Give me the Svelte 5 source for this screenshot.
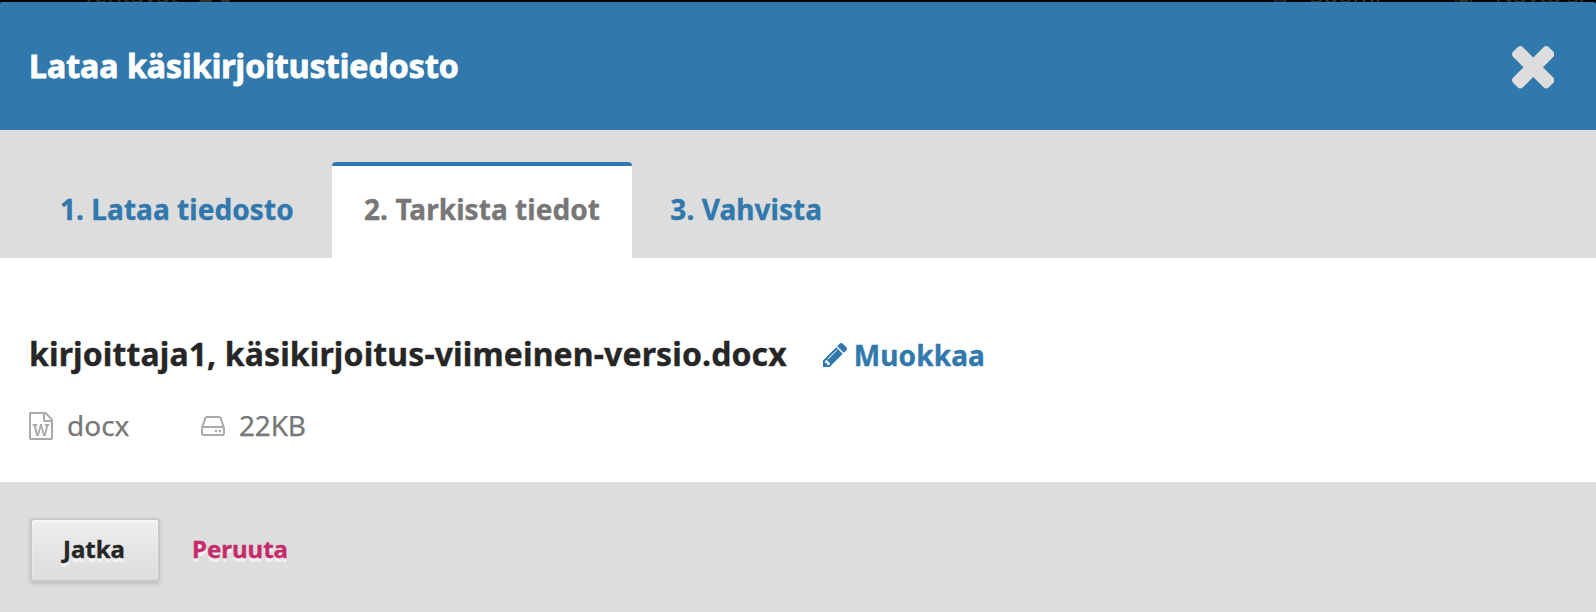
<script>
  let active = $state(1);
  const steps = ['1. Lataa tiedosto', '2. Tarkista tiedot', '3. Vahvista'];
</script>

<div class="page">
  <div class="backdrop" aria-hidden="true">
    <span class="tasks">Tehtävät <b>20</b></span>
    <span class="lang"><i>⊕</i>Suomi</span>
    <span class="site"><i>◉</i>Näytä si</span>
  </div>

  <header>
    <h1>Lataa käsikirjoitustiedosto</h1>
    <button class="close" aria-label="Sulje">
      <svg viewBox="302 366 1188 1188"><path d="M1490 1322q0 40-28 68l-136 136q-28 28-68 28t-68-28l-294-294-294 294q-28 28-68 28t-68-28l-136-136q-28-28-28-68t28-68l294-294-294-294q-28-28-28-68t28-68l136-136q28-28 68-28t68 28l294 294 294-294q28-28 68-28t68 28l136 136q28 28 28 68t-28 68l-294 294 294 294q28 28 28 68z" /></svg>
    </button>
  </header>

  <nav>
    {#each steps as step, i}
      <button class="tab" class:active={active === i} onclick={() => (active = i)}>{step}</button>
    {/each}
  </nav>

  <main>
    <div class="file">
      <span class="name">kirjoittaja1, käsikirjoitus-viimeinen-versio.docx</span>
      <button class="edit">
        <svg viewBox="128 149 1515 1515"><path d="M491 1536l91-91-235-235-91 91v107h128v128h107zm523-928q0-22-22-22-10 0-17 7l-542 542q-7 7-7 17 0 22 22 22 10 0 17-7l542-542q7-7 7-17zm-54-192l416 416-832 832h-416v-416zm683 96q0 53-37 90l-166 166-416-416 166-165q36-38 90-38 53 0 91 38l235 234q37 39 37 91z" /></svg>
        <span>Muokkaa</span>
      </button>
    </div>
    <div class="meta">
      <span class="type">
        <svg class="word" viewBox="128 0 1536 1792"><path d="M1596 380q28 28 48 76t20 88v1152q0 40-28 68t-68 28h-1344q-40 0-68-28t-28-68v-1600q0-40 28-68t68-28h896q40 0 88 20t76 48zm-444-244v376h376q-10-29-22-41l-313-313q-12-12-41-22zm384 1528v-1024h-416q-40 0-68-28t-28-68v-416h-768v1536h1280zm-1175-896v107h70l164 661h159l128-485q7-20 10-46 2-16 2-24h4l3 24q1 3 3.500 20t5.500 26l128 485h159l164-661h70v-107h-300v107h90l-99 438q-5 20-7 46l-2 21h-4l-3-21q-1-5-4-21t-5-25l-144-545h-114l-144 545q-2 9-4.500 24.500t-3.500 21.500l-4 21h-4l-2-21q-2-26-7-46l-99-438h90v-107h-300z" /></svg>
        <span>docx</span>
      </span>
      <span class="size">
        <svg class="disk" viewBox="128 256 1536 1280"><path d="M1168 1216q0 33-23.500 56.500t-56.500 23.500-56.500-23.500-23.500-56.500 23.500-56.500 56.500-23.500 56.500 23.500 23.500 56.500zm256 0q0 33-23.500 56.500t-56.500 23.500-56.500-23.500-23.500-56.500 23.500-56.500 56.500-23.500 56.500 23.500 23.500 56.500zm112 160v-320q0-13-9.500-22.500t-22.500-9.500h-1216q-13 0-22.500 9.500t-9.500 22.500v320q0 13 9.500 22.500t22.500 9.500h1216q13 0 22.500-9.500t9.500-22.500zm-1230-480h1180l-157-482q-4-13-16-21.500t-26-8.500h-782q-14 0-26 8.500t-16 21.500zm1358 160v320q0 66-47 113t-113 47h-1216q-66 0-113-47t-47-113v-320q0-25 16-75l197-606q17-53 63-86t101-33h782q55 0 101 33t63 86l197 606q16 50 16 75z" /></svg>
        <span>22KB</span>
      </span>
    </div>
  </main>

  <footer>
    <button class="primary">Jatka</button>
    <button class="cancel">Peruuta</button>
  </footer>
</div>

<style>
  :global(body) { margin: 0; background: #000; }
  .page {
    width: 1596px;
    height: 612px;
    overflow: hidden;
    display: flex;
    flex-direction: column;
    font-family: 'Noto Sans', sans-serif;
  }
  button {
    margin: 0;
    padding: 0;
    border: 0;
    background: none;
    font: inherit;
    cursor: pointer;
  }
  svg { display: block; fill: currentColor; flex: none; }
  .backdrop {
    flex: none;
    height: 2px;
    overflow: hidden;
    display: flex;
    align-items: flex-end;
    background: #000;
    color: #303030;
    font-size: 24px;
    line-height: 17px;
    white-space: pre;
    -webkit-text-stroke: 0.4px currentColor;
  }
  .backdrop span { display: flex; flex: none; }
  .backdrop i { width: 40px; font-style: normal; }
  .backdrop b { padding-left: 14px; letter-spacing: 6px; }
  .tasks { margin-left: 82px; width: 1188px; }
  .lang { width: 183px; }
  .site i { width: 42px; }
  header {
    flex: none;
    height: 128px;
    box-sizing: border-box;
    padding: 0 42px 0 29px;
    display: flex;
    align-items: center;
    justify-content: space-between;
    background: #3178ad;
    border-radius: 2px 2px 0 0;
  }
  h1 {
    margin: 0;
    color: #fff;
    font-size: 32px;
    line-height: 128px;
    font-weight: 700;
    letter-spacing: 0.05px;
    -webkit-text-stroke: 0.9px #fff;
  }
  .close { color: #ddd; padding-top: 3px; }
  .close svg { width: 42.5px; height: 42.5px; }
  nav {
    flex: none;
    height: 128px;
    box-sizing: border-box;
    padding: 32px 28px 0;
    display: flex;
    background: #ddd;
  }
  .tab {
    height: 96px;
    box-sizing: border-box;
    padding: 0 32px 6px;
    margin-right: 6.3px;
    color: #3178ad;
    font-size: 28px;
    line-height: 82px;
    font-weight: 700;
    letter-spacing: 0.06px;
    -webkit-text-stroke: 0.35px currentColor;
    border-top: 4px solid transparent;
    border-radius: 4px 4px 0 0;
    white-space: nowrap;
  }
  .tab.active { background: #fff; border-top-color: #3178ad; color: #777; }
  main {
    flex: none;
    height: 224px;
    box-sizing: border-box;
    padding: 71px 29px 0;
    background: #fff;
  }
  .file { display: flex; height: 50px; line-height: 50px; }
  .name {
    font-size: 32px;
    font-weight: 700;
    color: #262626;
    letter-spacing: 0.11px;
    -webkit-text-stroke: 0.35px currentColor;
    white-space: nowrap;
  }
  .edit {
    display: flex;
    align-items: center;
    gap: 7px;
    margin-left: 36px;
    padding-top: 2px;
    color: #3178ad;
    font-size: 28px;
    font-weight: 700;
    letter-spacing: 0.1px;
    -webkit-text-stroke: 0.35px currentColor;
    line-height: 48px;
  }
  .edit svg { width: 24px; height: 24px; }
  .meta { display: flex; height: 40px; margin-top: 26px; color: #777; font-size: 28px; line-height: 40px; }
  .meta span { display: flex; align-items: center; }
  .meta span span { -webkit-text-stroke: 0.25px currentColor; }
  .size span { letter-spacing: -0.2px; }
  .meta svg { color: #aaa; margin-right: 14px; position: relative; top: 1px; }
  .word { width: 24px; height: 28px; }
  .disk { width: 24px; height: 20px; }
  .type { width: 172px; }
  footer {
    flex: none;
    height: 130px;
    box-sizing: border-box;
    padding: 36px 30px 0;
    display: flex;
    background: #ddd;
    font-weight: 700;
    font-size: 24px;
    text-shadow: 0 4px 0 rgba(255, 255, 255, 0.6);
  }
  footer button { display: flex; line-height: 58px; text-shadow: inherit; -webkit-text-stroke: 0.35px currentColor; }
  .primary {
    height: 64px;
    width: 130px;
    box-sizing: border-box;
    padding-left: 31px;
    border: 2px solid #c8c8c8;
    border-radius: 4px;
    color: #262626;
    background: linear-gradient(#eee, #ddd);
    box-shadow: inset 0 2px 2px #f8f8f8, 0 2px 4px rgba(0, 0, 0, 0.15);
  }
  .cancel { height: 64px; margin-left: 32px; padding-top: 2px; color: #c52b6b; }
</style>
